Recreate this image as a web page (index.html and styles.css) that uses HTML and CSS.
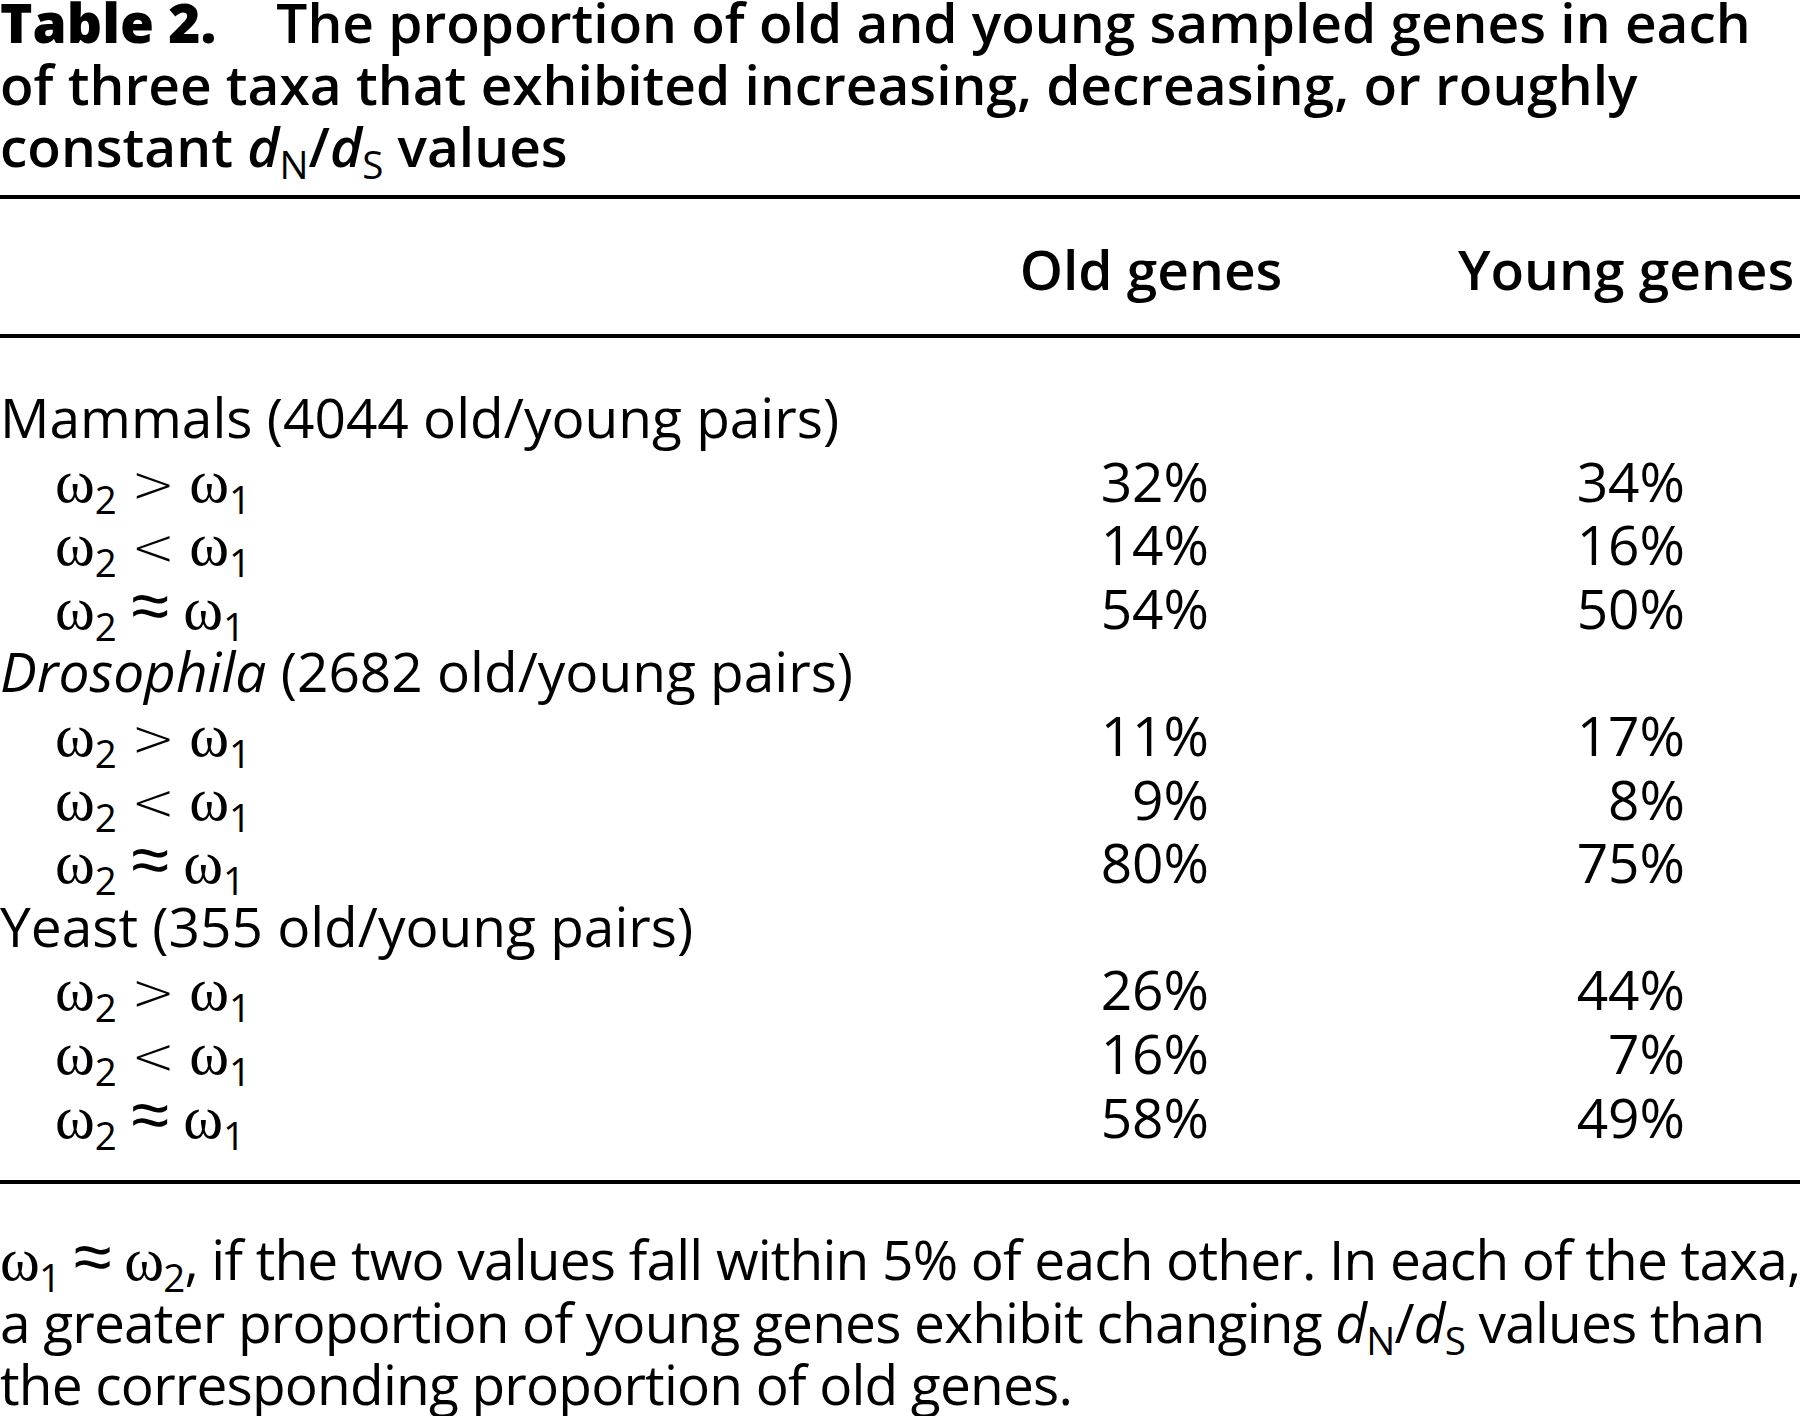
FILE: index.html
```html
<!DOCTYPE html>
<html>
<head>
<meta charset="utf-8">
<title>Table 2</title>
<link rel="stylesheet" href="styles.css">
</head>
<body>
<div class="caption"><span class="label">Table 2.</span>The proportion of old and young sampled genes in each<br>of three taxa that exhibited increasing, decreasing, or roughly<br>constant <i>d</i><sub>N</sub>/<i>d</i><sub>S</sub> values</div>
<div class="rule rule-top"></div>
<div class="row head">
  <div class="cell"></div>
  <div class="cell h-old">Old genes</div>
  <div class="cell h-young">Young genes</div>
</div>
<div class="rule"></div>
<div class="tbody">
  <div class="row"><div class="cell group">Mammals (4044 old/young pairs)</div><div class="cell num old"></div><div class="cell num young"></div></div>
  <div class="row"><div class="cell sub-row"><span class="w">ω</span><sub>2</sub> <span class="rel">&gt;</span> <span class="w">ω</span><sub>1</sub></div><div class="cell num old">32%</div><div class="cell num young">34%</div></div>
  <div class="row"><div class="cell sub-row"><span class="w">ω</span><sub>2</sub> <span class="rel">&lt;</span> <span class="w">ω</span><sub>1</sub></div><div class="cell num old">14%</div><div class="cell num young">16%</div></div>
  <div class="row"><div class="cell sub-row"><span class="w">ω</span><sub>2</sub> <span class="rel approx">≈</span> <span class="w">ω</span><sub>1</sub></div><div class="cell num old">54%</div><div class="cell num young">50%</div></div>
  <div class="row"><div class="cell group"><i>Drosophila</i> (2682 old/young pairs)</div><div class="cell num old"></div><div class="cell num young"></div></div>
  <div class="row"><div class="cell sub-row"><span class="w">ω</span><sub>2</sub> <span class="rel">&gt;</span> <span class="w">ω</span><sub>1</sub></div><div class="cell num old">11%</div><div class="cell num young">17%</div></div>
  <div class="row"><div class="cell sub-row"><span class="w">ω</span><sub>2</sub> <span class="rel">&lt;</span> <span class="w">ω</span><sub>1</sub></div><div class="cell num old">9%</div><div class="cell num young">8%</div></div>
  <div class="row"><div class="cell sub-row"><span class="w">ω</span><sub>2</sub> <span class="rel approx">≈</span> <span class="w">ω</span><sub>1</sub></div><div class="cell num old">80%</div><div class="cell num young">75%</div></div>
  <div class="row"><div class="cell group">Yeast (355 old/young pairs)</div><div class="cell num old"></div><div class="cell num young"></div></div>
  <div class="row"><div class="cell sub-row"><span class="w">ω</span><sub>2</sub> <span class="rel">&gt;</span> <span class="w">ω</span><sub>1</sub></div><div class="cell num old">26%</div><div class="cell num young">44%</div></div>
  <div class="row"><div class="cell sub-row"><span class="w">ω</span><sub>2</sub> <span class="rel">&lt;</span> <span class="w">ω</span><sub>1</sub></div><div class="cell num old">16%</div><div class="cell num young">7%</div></div>
  <div class="row"><div class="cell sub-row"><span class="w">ω</span><sub>2</sub> <span class="rel approx">≈</span> <span class="w">ω</span><sub>1</sub></div><div class="cell num old">58%</div><div class="cell num young">49%</div></div>
</div>
<div class="rule"></div>
<div class="note"><span class="w">ω</span><sub>1</sub> <span class="rel approx">≈</span> <span class="w">ω</span><sub>2</sub>, if the two values fall within 5% of each other. In each of the taxa,<br>a greater proportion of young genes exhibit changing <i>d</i><sub>N</sub>/<i>d</i><sub>S</sub> values than<br>the corresponding proportion of old genes.</div>
</body>
</html>
```

FILE: styles.css
```css
html, body {
  margin: 0;
  padding: 0;
  background: #ffffff;
  overflow: hidden;
}

body {
  width: 1800px;
  font-family: "Open Sans", "Noto Sans", sans-serif;
  color: #000000;
}

sub {
  font-size: 0.7em;
  vertical-align: -0.3em;
  line-height: 0;
  font-style: normal;
}

.caption {
  font-size: 55px;
  line-height: 62px;
  font-weight: 600;
  margin-top: -9px;
  white-space: nowrap;
}

.caption .label {
  font-weight: 800;
  margin-right: 60px;
}

.caption sub {
  font-weight: 400;
}

.rule {
  height: 4px;
  background: #000000;
}

.rule-top {
  margin-top: 18px;
}

.row {
  display: grid;
  grid-template-columns: 1004px 294px 502px;
  font-size: 55px;
  line-height: 63.6px;
  height: 63.6px;
}

.cell {
  white-space: nowrap;
}

.head {
  padding: 38px 0 33px;
  height: 64px;
  line-height: 64px;
  font-weight: 600;
}

.h-old {
  text-align: center;
}

.h-young {
  padding-left: 160px;
}

.tbody {
  padding: 47px 0 32px;
}

.sub-row {
  padding-left: 55px;
}

.num {
  text-align: right;
}

.num.old {
  padding-right: 89px;
}

.num.young {
  padding-right: 115px;
}

.w {
  font-family: "Liberation Serif", "DejaVu Serif", serif;
  font-size: 1.1em;
  line-height: 0;
}

.rel {
  font-family: "DejaVu Sans", "Open Sans", sans-serif;
  font-weight: 300;
  font-size: 0.95em;
  line-height: 0;
}

.rel.approx {
  font-family: "Liberation Sans", "DejaVu Sans", sans-serif;
  font-weight: 400;
  font-size: 1.25em;
}

.note {
  margin-top: 44px;
  font-size: 55px;
  line-height: 62.5px;
  letter-spacing: -0.8px;
  white-space: nowrap;
}
```
